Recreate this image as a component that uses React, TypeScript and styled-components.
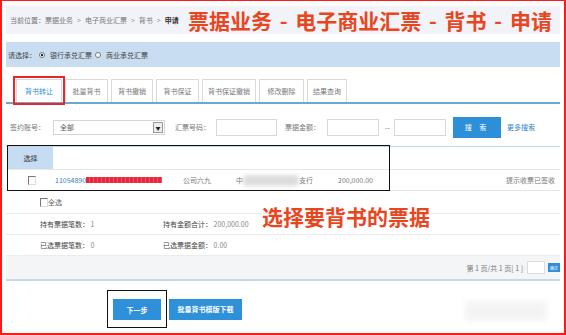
import React from "react";
import styled, { createGlobalStyle } from "styled-components";

const GlobalStyle = createGlobalStyle`
  html, body {
    margin: 0;
    padding: 0;
    background: #fff;
  }
  body {
    font-family: "Noto Sans CJK SC", "Liberation Sans", sans-serif;
  }
`;

const Frame = styled.div`
  position: relative;
  width: 566px;
  height: 335px;
  box-sizing: border-box;
  border: 2px solid #ff1a1a;
  border-top-width: 1px;
  padding: 0 4px;
  overflow: hidden;
  font-size: 7px;
  color: #666;
`;

const Crumbs = styled.div`
  display: flex;
  align-items: center;
  height: 28px;
  margin-top: 5px;
  padding-left: 4px;
  background: #f1f3f8;
`;

const CrumbText = styled.div`
  width: 178px;
  flex-shrink: 0;
  color: #777;
  white-space: nowrap;
  b {
    color: #333;
  }
`;

const Sep = styled.span`
  padding: 0 4px;
  color: #999;
`;

const BigTitle = styled.div`
  font-size: 21px;
  font-weight: 700;
  color: #e8461e;
  white-space: nowrap;
  line-height: 1;
  word-spacing: 3px;
`;

const ChooseBar = styled.div`
  display: flex;
  align-items: center;
  height: 25px;
  margin-top: 8px;
  padding-left: 2px;
  background: #c9ddf1;
  color: #444;
`;

const Radio = styled.span<{ $on?: boolean }>`
  display: inline-block;
  width: 4px;
  height: 4px;
  margin: 0 5px 0 3px;
  border: 1px solid #777;
  border-radius: 50%;
  background: ${(p) => (p.$on ? "radial-gradient(#222 40%, #fff 50%)" : "#fff")};
`;

const TabBar = styled.div`
  display: flex;
  align-items: flex-end;
  height: 25px;
  margin-top: 10px;
  padding-left: 10px;
  border-bottom: 2px solid #6aa8cc;
`;

const Tab = styled.div<{ $w: number; $active?: boolean }>`
  display: flex;
  align-items: center;
  justify-content: center;
  width: ${(p) => p.$w}px;
  height: 23px;
  margin-right: 3px;
  box-sizing: border-box;
  border: 1px solid #dadada;
  border-bottom: none;
  background: #fff;
  color: ${(p) => (p.$active ? "#2f8fd3" : "#777")};
  outline: ${(p) => (p.$active ? "2px solid #e8272c" : "none")};
  outline-offset: 1px;
`;

const SearchRow = styled.div`
  display: flex;
  align-items: center;
  height: 22px;
  margin-top: 12px;
  padding-left: 4px;
`;

const Label = styled.span<{ $w: number; $ml?: number }>`
  width: ${(p) => p.$w}px;
  margin-left: ${(p) => p.$ml ?? 0}px;
  flex-shrink: 0;
  color: #777;
  white-space: nowrap;
`;

const Select = styled.div`
  display: flex;
  align-items: center;
  justify-content: space-between;
  width: 112px;
  height: 15px;
  box-sizing: border-box;
  padding: 0 1px 0 6px;
  border: 1px solid #d6d6d6;
  color: #555;
`;

const Arrow = styled.span`
  display: flex;
  align-items: center;
  justify-content: center;
  width: 8px;
  height: 9px;
  border: 1px solid #999;
  background: #eee;
  font-size: 5px;
  color: #222;
`;

const Input = styled.div<{ $w: number }>`
  width: ${(p) => p.$w}px;
  height: 17px;
  box-sizing: border-box;
  border: 1px solid #d8d8d8;
  background: #fff;
`;

const SearchBtn = styled.div`
  display: flex;
  align-items: center;
  justify-content: center;
  width: 48px;
  height: 21px;
  margin-left: 7px;
  background: #2d8fd8;
  color: #fff;
  letter-spacing: 3px;
`;

const Link = styled.span<{ $ml?: number }>`
  margin-left: ${(p) => p.$ml ?? 0}px;
  color: #2f7fc8;
`;

const Divider = styled.div`
  margin-top: 8px;
  border-top: 1px solid #bfd5ea;
`;

const Table = styled.div`
  position: relative;
  padding-left: 2px;
`;

const Head = styled.div`
  display: flex;
  height: 22px;
  border-bottom: 1px solid #e6e6e6;
`;

const HeadCell = styled.div`
  display: flex;
  align-items: center;
  justify-content: center;
  width: 45px;
  background: #c6dcf2;
  color: #333;
`;

const Row = styled.div`
  display: flex;
  align-items: center;
  height: 20px;
  border-bottom: 1px solid #e6e6e6;
`;

const Cell = styled.div<{ $w?: number; $center?: boolean }>`
  display: flex;
  align-items: center;
  justify-content: ${(p) => (p.$center ? "center" : "flex-start")};
  width: ${(p) => (p.$w ? `${p.$w}px` : "auto")};
  flex: ${(p) => (p.$w ? "none" : "1")};
  color: #777;
  white-space: nowrap;
`;

const Check = styled.span`
  display: inline-block;
  width: 6px;
  height: 7px;
  border-top: 1px solid #777;
  border-left: 1px solid #777;
  border-right: 1px solid #ddd;
  border-bottom: 1px solid #ddd;
  background: #fff;
`;

const Redact = styled.span`
  display: inline-block;
  width: 76px;
  height: 6px;
  background: repeating-linear-gradient(90deg, #e8283a 0 3px, #f0505e 3px 4px);
`;

const Smudge = styled.span<{ $w: number; $h: number }>`
  display: inline-block;
  width: ${(p) => p.$w}px;
  height: ${(p) => p.$h}px;
  border-radius: 4px;
  background: #dcdcdc;
  filter: blur(2px);
`;

const Status = styled.span`
  margin-left: auto;
  padding-right: 5px;
  color: #777;
`;

const Annot = styled.div<{ $x: number; $y: number; $w: number; $h: number }>`
  position: absolute;
  left: ${(p) => p.$x}px;
  top: ${(p) => p.$y}px;
  width: ${(p) => p.$w}px;
  height: ${(p) => p.$h}px;
  box-sizing: border-box;
  border: 1.5px solid #111;
  pointer-events: none;
`;

const AllRow = styled.div`
  display: flex;
  align-items: center;
  height: 22px;
  padding-left: 34px;
  border-bottom: 1px solid #ececec;
  color: #666;
`;

const SumRow = styled.div`
  display: flex;
  align-items: center;
  height: 20px;
  padding-left: 34px;
  border-bottom: 1px solid #ececec;
`;

const SumItem = styled.div<{ $w?: number }>`
  width: ${(p) => (p.$w ? `${p.$w}px` : "auto")};
  color: #444;
  white-space: nowrap;
  span {
    color: #888;
  }
`;

const Pager = styled.div`
  display: flex;
  align-items: center;
  justify-content: flex-end;
  height: 23px;
  background: #f3f5f7;
  border-bottom: 2px solid #c4d9ec;
  color: #777;
`;

const PageInput = styled.div`
  width: 16px;
  height: 11px;
  margin: 0 3px 0 4px;
  border: 1px solid #ddd;
  background: #fff;
`;

const TinyBtn = styled.div`
  display: flex;
  align-items: center;
  justify-content: center;
  width: 12px;
  height: 9px;
  background: #2d8fd8;
  color: #fff;
  font-size: 4px;
`;

const Actions = styled.div`
  display: flex;
  align-items: center;
  margin-top: 9px;
  padding-left: 101px;
`;

const Boxed = styled.div`
  padding: 8px 5px 7px;
  border: 1.5px solid #111;
`;

const Btn = styled.div<{ $w: number; $ml?: number }>`
  display: flex;
  align-items: center;
  justify-content: center;
  width: ${(p) => p.$w}px;
  height: 21px;
  margin-left: ${(p) => p.$ml ?? 0}px;
  background: #2e90d8;
  color: #fff;
  font-weight: 700;
`;

const Note = styled.div`
  position: absolute;
  left: 260px;
  top: 205px;
  font-size: 21px;
  font-weight: 700;
  color: #e8461e;
  line-height: 1;
  white-space: nowrap;
`;

const Watermark = styled.div`
  position: absolute;
  left: 463px;
  top: 300px;
  width: 82px;
  height: 20px;
  background: #e6e6e6;
  opacity: 0.45;
  filter: blur(3px);
`;

const tabs = [
  { t: "背书转让", w: 46 },
  { t: "批量背书", w: 43 },
  { t: "背书撤销", w: 42 },
  { t: "背书保证", w: 43 },
  { t: "背书保证撤销", w: 54 },
  { t: "修改删除", w: 45 },
  { t: "结果查询", w: 40 },
];

export default function App() {
  return (
    <>
      <GlobalStyle />
      <Frame>
        <Crumbs>
          <CrumbText>
            当前位置：票据业务<Sep>&gt;</Sep>电子商业汇票<Sep>&gt;</Sep>背书
            <Sep>&gt;</Sep>
            <b>申请</b>
          </CrumbText>
          <BigTitle>票据业务 - 电子商业汇票 - 背书 - 申请</BigTitle>
        </Crumbs>

        <ChooseBar>
          请选择：<Radio $on />
          银行承兑汇票
          <Radio />
          商业承兑汇票
        </ChooseBar>

        <TabBar>
          {tabs.map((tab, i) => (
            <Tab key={tab.t} $w={tab.w} $active={i === 0}>
              {tab.t}
            </Tab>
          ))}
        </TabBar>

        <SearchRow>
          <Label $w={43}>签约账号：</Label>
          <Select>
            全部
            <Arrow>▼</Arrow>
          </Select>
          <Label $w={41} $ml={10}>
            汇票号码：
          </Label>
          <Input $w={61} />
          <Label $w={42} $ml={8}>
            票据金额：
          </Label>
          <Input $w={52} />
          <Label $w={9} $ml={6}>
            --
          </Label>
          <Input $w={52} />
          <SearchBtn>搜 索</SearchBtn>
          <Link $ml={6}>更多搜索</Link>
        </SearchRow>

        <Divider />

        <Table>
          <Head>
            <HeadCell>选择</HeadCell>
          </Head>
          <Row>
            <Cell $w={47} $center>
              <Check />
            </Cell>
            <Cell $w={128}>
              <Link>11054890</Link>
              <Redact />
            </Cell>
            <Cell $w={53}>公司六九</Cell>
            <Cell $w={102}>
              中<Smudge $w={56} $h={11} />
              支行
            </Cell>
            <Cell>
              200,000.00
              <Status>提示收票已签收</Status>
            </Cell>
          </Row>
          <Annot $x={1} $y={-2} $w={383} $h={46} />
        </Table>

        <AllRow>
          <Check />
          全选
        </AllRow>
        <SumRow>
          <SumItem $w={123}>
            持有票据笔数： <span>1</span>
          </SumItem>
          <SumItem>
            持有金额合计： <span>200,000.00</span>
          </SumItem>
        </SumRow>
        <SumRow>
          <SumItem $w={123}>
            已选票据笔数： <span>0</span>
          </SumItem>
          <SumItem>
            已选票据金额： <span>0.00</span>
          </SumItem>
        </SumRow>

        <Pager>
          第 1 页/共 1 页[ 1 ]
          <PageInput />
          <TinyBtn>确定</TinyBtn>
        </Pager>

        <Actions>
          <Boxed>
            <Btn $w={48}>下一步</Btn>
          </Boxed>
          <Btn $w={73} $ml={2}>
            批量背书模版下载
          </Btn>
        </Actions>

        <Note>选择要背书的票据</Note>
        <Watermark />
      </Frame>
    </>
  );
}
